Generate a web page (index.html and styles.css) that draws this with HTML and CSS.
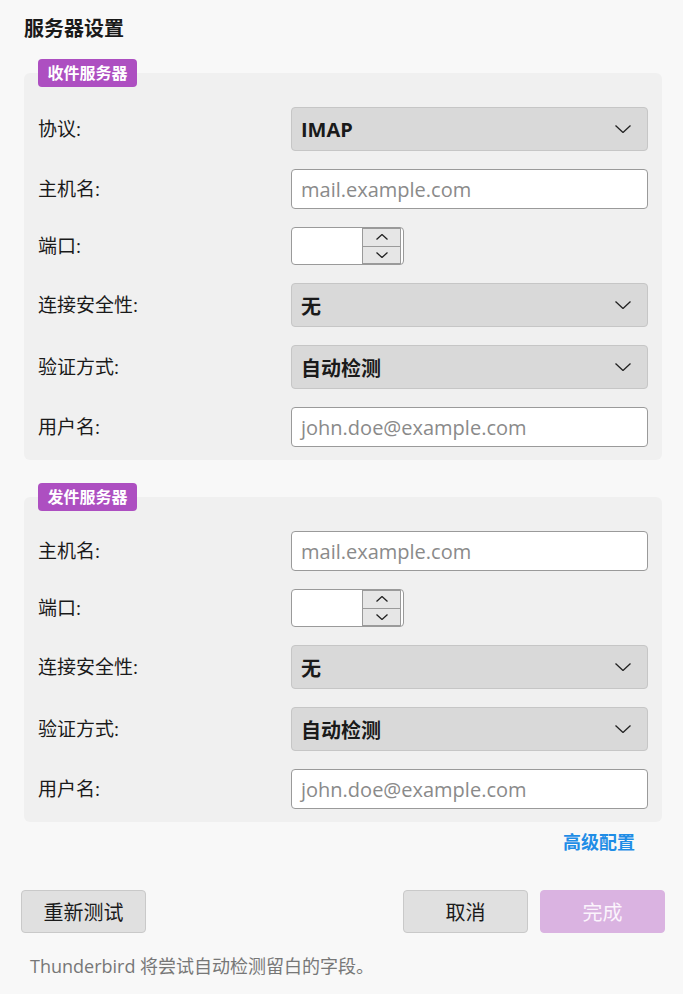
FILE: index.html
```html
<!DOCTYPE html>
<html lang="zh-CN">
<head>
<meta charset="utf-8">
<title>服务器设置</title>
<link rel="stylesheet" href="styles.css">
</head>
<body>
<div class="page">
  <h1 class="title">服务器设置</h1>

  <section class="panel">
    <div class="legend">收件服务器</div>
    <div class="rows">
      <label class="label">协议:</label>
      <div class="select"><span>IMAP</span><svg class="chev" width="16" height="8" viewBox="0 0 16 8"><polyline points="0.5,0.5 8,7.5 15.5,0.5"/></svg></div>

      <label class="label">主机名:</label>
      <div class="text-input placeholder">mail.example.com</div>

      <label class="label">端口:</label>
      <div class="spin">
        <div class="spin-field"></div>
        <div class="spin-btns">
          <div class="spin-btn"><svg width="12" height="6" viewBox="0 0 12 6"><polyline points="0.5,5.5 6,0.5 11.5,5.5"/></svg></div>
          <div class="spin-btn"><svg width="12" height="6" viewBox="0 0 12 6"><polyline points="0.5,0.5 6,5.5 11.5,0.5"/></svg></div>
        </div>
      </div>

      <label class="label">连接安全性:</label>
      <div class="select"><span>无</span><svg class="chev" width="16" height="8" viewBox="0 0 16 8"><polyline points="0.5,0.5 8,7.5 15.5,0.5"/></svg></div>

      <label class="label">验证方式:</label>
      <div class="select"><span>自动检测</span><svg class="chev" width="16" height="8" viewBox="0 0 16 8"><polyline points="0.5,0.5 8,7.5 15.5,0.5"/></svg></div>

      <label class="label">用户名:</label>
      <div class="text-input placeholder">john.doe@example.com</div>
    </div>
  </section>

  <section class="panel panel-second">
    <div class="legend">发件服务器</div>
    <div class="rows">
      <label class="label">主机名:</label>
      <div class="text-input placeholder">mail.example.com</div>

      <label class="label">端口:</label>
      <div class="spin">
        <div class="spin-field"></div>
        <div class="spin-btns">
          <div class="spin-btn"><svg width="12" height="6" viewBox="0 0 12 6"><polyline points="0.5,5.5 6,0.5 11.5,5.5"/></svg></div>
          <div class="spin-btn"><svg width="12" height="6" viewBox="0 0 12 6"><polyline points="0.5,0.5 6,5.5 11.5,0.5"/></svg></div>
        </div>
      </div>

      <label class="label">连接安全性:</label>
      <div class="select"><span>无</span><svg class="chev" width="16" height="8" viewBox="0 0 16 8"><polyline points="0.5,0.5 8,7.5 15.5,0.5"/></svg></div>

      <label class="label">验证方式:</label>
      <div class="select"><span>自动检测</span><svg class="chev" width="16" height="8" viewBox="0 0 16 8"><polyline points="0.5,0.5 8,7.5 15.5,0.5"/></svg></div>

      <label class="label">用户名:</label>
      <div class="text-input placeholder">john.doe@example.com</div>
    </div>
  </section>

  <div class="link-row"><a class="link">高级配置</a></div>

  <div class="buttons">
    <div class="btn">重新测试</div>
    <div class="spacer"></div>
    <div class="btn">取消</div>
    <div class="btn btn-primary">完成</div>
  </div>

  <p class="note">Thunderbird 将尝试自动检测留白的字段。</p>
</div>
</body>
</html>
```

FILE: styles.css
```css
* { box-sizing: border-box; }

html, body {
  margin: 0;
  padding: 0;
  background: #f8f8f8;
}

body {
  font-family: "Open Sans", "Noto Sans CJK SC", sans-serif;
  color: #1a1a1a;
}

.page {
  padding: 17px 18px 0 21px;
}

.title {
  margin: 0 0 32px 3px;
  font-size: 20px;
  line-height: 24px;
  font-weight: 700;
  color: #1a1a1a;
}

.panel {
  position: relative;
  margin: 0 0 0 3px;
  width: 638px;
  background: #f0f0f0;
  border-radius: 6px;
  padding: 34px 14px 13px 14px;
}

.panel-second {
  margin-top: 37px;
}

.legend {
  position: absolute;
  left: 14px;
  top: -14px;
  height: 28px;
  padding: 0 9.5px;
  background: #ad4fc1;
  color: #fff;
  border-radius: 4px;
  font-size: 16px;
  font-weight: 700;
  line-height: 28px;
}

.rows {
  display: grid;
  grid-template-columns: 253px 357px;
  row-gap: 18px;
  align-items: center;
}

.label {
  font-size: 19px;
  line-height: 24px;
  color: #1a1a1a;
}

.select {
  height: 44px;
  background: #d9d9d9;
  border: 1px solid #c6c6c6;
  border-radius: 4px;
  display: flex;
  align-items: center;
  justify-content: space-between;
  padding: 0 16px 0 9px;
  font-size: 20px;
  font-weight: 700;
  color: #1a1a1a;
}

.chev polyline,
.spin-btn polyline {
  fill: none;
  stroke: #222;
  stroke-width: 1.3;
}

.text-input {
  height: 40px;
  background: #fff;
  border: 1px solid #9a9a9a;
  border-radius: 4px;
  display: flex;
  align-items: center;
  padding: 0 9px;
  font-size: 20px;
}

.placeholder {
  color: #8a8a8a;
}

.spin {
  width: 113px;
  height: 38px;
  border: 1px solid #9a9a9a;
  border-radius: 4px;
  background: #fff;
  display: flex;
  padding-right: 2px;
  overflow: hidden;
}

.spin-field {
  flex: 1;
}

.spin-btns {
  width: 39px;
  display: flex;
  flex-direction: column;
}

.spin-btn {
  flex: 1;
  background: #e6e6e6;
  border: 1px solid #9a9a9a;
  display: flex;
  align-items: center;
  justify-content: center;
}

.spin-btn + .spin-btn {
  border-top: none;
}

.link-row {
  display: flex;
  justify-content: flex-end;
  width: 641px;
  padding-right: 27px;
  margin-top: 8px;
}

.link {
  font-size: 18px;
  line-height: 24px;
  font-weight: 700;
  color: #1f8de6;
}

.buttons {
  display: flex;
  gap: 12px;
  margin-top: 36px;
  width: 644px;
}

.spacer {
  flex: 1;
}

.btn {
  width: 125px;
  height: 43px;
  background: #e0e0e0;
  border: 1px solid #c9c9c9;
  border-radius: 4px;
  display: flex;
  align-items: center;
  justify-content: center;
  font-size: 20px;
  color: #1a1a1a;
}

.btn-primary {
  background: #dab3e1;
  border-color: #dab3e1;
  color: #fbf4fc;
}

.note {
  margin: 21px 0 0 9px;
  font-size: 18px;
  line-height: 24px;
  color: #777;
}
```
